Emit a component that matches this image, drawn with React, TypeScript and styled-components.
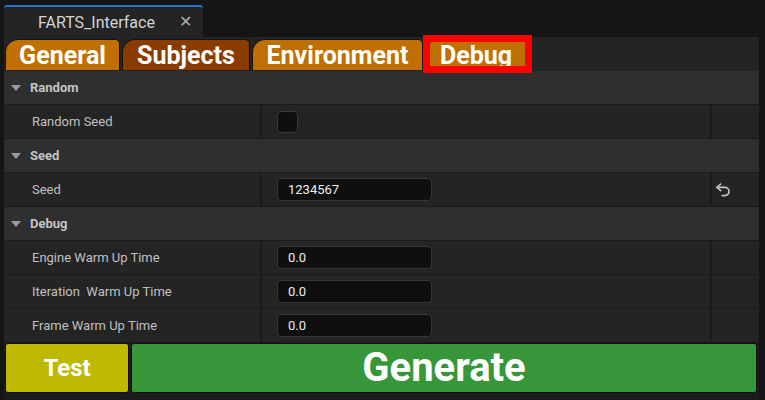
import React from "react";
import styled, { createGlobalStyle } from "styled-components";

const Global = createGlobalStyle`
  html, body { margin: 0; padding: 0; background: #151515; }
  body { font-family: Roboto, "Liberation Sans", sans-serif; }
  * { box-sizing: border-box; }
`;

const Page = styled.div`
  width: 765px;
  height: 400px;
  background: #151515;
  display: flex;
  flex-direction: column;
  overflow: hidden;
`;

const TitleBar = styled.div`
  height: 37px;
  padding: 5px 0 0 4px;
  display: flex;
`;

const DocTab = styled.div`
  width: 199px;
  height: 32px;
  background: #242424;
  border-top: 2px solid #2b6fc9;
  border-radius: 3px 3px 0 0;
  display: flex;
  align-items: center;
  padding: 0 0 0 34px;
  color: #d4d4d4;
  font-size: 16px;
`;

const TabTitle = styled.span`
  flex: 1;
`;

const Close = styled.span`
  width: 24px;
  color: #b0b0b0;
  font-size: 16px;
  line-height: 1;
`;

const Panel = styled.div`
  flex: 1;
  width: 755px;
  margin-left: 4px;
  background: #242424;
  display: flex;
  flex-direction: column;
`;

const TabRow = styled.div`
  height: 34px;
  display: flex;
  align-items: flex-end;
  gap: 2px;
  padding: 0 0 1px 1px;
  background: #242424;
`;

const Tab = styled.div<{ $bg: string; $w: number }>`
  position: relative;
  width: ${(p) => p.$w}px;
  height: 31px;
  background: ${(p) => p.$bg};
  border: 1px solid #1a1206;
  border-bottom: none;
  border-radius: 13px 5px 0 0;
  color: #ffffff;
  font-weight: 700;
  font-size: 25px;
  display: flex;
  align-items: center;
  justify-content: center;
  line-height: 1;
  padding-top: 1px;
`;

const Highlight = styled.div`
  position: absolute;
  left: -3px;
  top: -5px;
  right: -6px;
  bottom: -3px;
  border: 7px solid #ff0000;
  pointer-events: none;
`;

const Rows = styled.div`
  display: flex;
  flex-direction: column;
  gap: 1px;
  background: #1a1a1a;
  padding-bottom: 1px;
`;

const Category = styled.div`
  height: 33px;
  background: #2f2f2f;
  display: flex;
  align-items: center;
  padding-left: 7px;
  color: #c4c4c4;
  font-weight: 700;
  font-size: 13px;
  gap: 9px;
`;

const Arrow = styled.span`
  width: 0;
  height: 0;
  border-left: 5.5px solid transparent;
  border-right: 5.5px solid transparent;
  border-top: 6px solid #9a9a9a;
`;

const PropRow = styled.div`
  height: 33px;
  display: grid;
  grid-template-columns: 256px 1fr 47px;
  column-gap: 2px;
  background: #1a1a1a;
`;

const NameCell = styled.div`
  background: #242424;
  display: flex;
  align-items: center;
  padding-left: 28px;
  color: #c0c0c0;
  font-size: 13px;
  white-space: pre;
`;

const ValueCell = styled.div`
  background: #242424;
  display: flex;
  align-items: center;
  padding-left: 15px;
`;

const ResetCell = styled.div`
  background: #242424;
  display: flex;
  align-items: center;
  padding-left: 2px;
  color: #c4c4c4;
`;

const Check = styled.div`
  width: 21px;
  height: 22px;
  background: #0f0f0f;
  border: 1px solid #3a3a3a;
  border-radius: 4px;
`;

const Input = styled.div`
  width: 155px;
  height: 23px;
  background: #0f0f0f;
  border: 1px solid #363636;
  border-radius: 4px;
  display: flex;
  align-items: center;
  padding-left: 10px;
  color: #ededed;
  font-size: 13px;
`;

const ButtonBar = styled.div`
  flex: 1;
  display: flex;
  gap: 2px;
  padding: 0 2px 7px 1px;
  background: #1c1c1c;
`;

const BigButton = styled.div<{ $bg: string; $size: number; $w?: number }>`
  ${(p) => (p.$w ? `width: ${p.$w}px;` : "flex: 1;")}
  background: ${(p) => p.$bg};
  border: 1px solid #111;
  border-radius: 3px;
  color: #ffffff;
  font-weight: 700;
  font-size: ${(p) => p.$size}px;
  display: flex;
  align-items: center;
  justify-content: center;
  line-height: 1;
`;

const ResetIcon = () => (
  <svg width="18" height="18" viewBox="0 0 24 24" fill="none" stroke="currentColor" strokeWidth="2.2" strokeLinecap="round" strokeLinejoin="round">
    <path d="M9 13 4 8.5 9 4" />
    <path d="M4 8.5h10.5a5.5 5.5 0 0 1 0 11H11" />
  </svg>
);

type Prop = { name: string; kind: "check" | "input"; value?: string; reset?: boolean };
const sections: { title: string; props: Prop[] }[] = [
  { title: "Random", props: [{ name: "Random Seed", kind: "check" }] },
  { title: "Seed", props: [{ name: "Seed", kind: "input", value: "1234567", reset: true }] },
  {
    title: "Debug",
    props: [
      { name: "Engine Warm Up Time", kind: "input", value: "0.0" },
      { name: "Iteration  Warm Up Time", kind: "input", value: "0.0" },
      { name: "Frame Warm Up Time", kind: "input", value: "0.0" },
    ],
  },
];

const tabs = [
  { label: "General", bg: "#c07002", w: 115 },
  { label: "Subjects", bg: "#8a3c00", w: 128 },
  { label: "Environment", bg: "#c07002", w: 171 },
  { label: "Debug", bg: "#c07002", w: 102, active: true },
];

export default function App() {
  return (
    <Page>
      <Global />
      <TitleBar>
        <DocTab>
          <TabTitle>FARTS_Interface</TabTitle>
          <Close>✕</Close>
        </DocTab>
      </TitleBar>
      <Panel>
        <TabRow>
          {tabs.map((t) => (
            <Tab key={t.label} $bg={t.bg} $w={t.w}>
              {t.label}
              {t.active && <Highlight />}
            </Tab>
          ))}
        </TabRow>
        <Rows>
          {sections.map((s) => (
            <React.Fragment key={s.title}>
              <Category>
                <Arrow />
                {s.title}
              </Category>
              {s.props.map((p) => (
                <PropRow key={p.name}>
                  <NameCell>{p.name}</NameCell>
                  <ValueCell>{p.kind === "check" ? <Check /> : <Input>{p.value}</Input>}</ValueCell>
                  <ResetCell>{p.reset && <ResetIcon />}</ResetCell>
                </PropRow>
              ))}
            </React.Fragment>
          ))}
        </Rows>
        <ButtonBar>
          <BigButton $bg="#bfb800" $size={24} $w={124}>Test</BigButton>
          <BigButton $bg="#38963a" $size={40}>Generate</BigButton>
        </ButtonBar>
      </Panel>
    </Page>
  );
}
